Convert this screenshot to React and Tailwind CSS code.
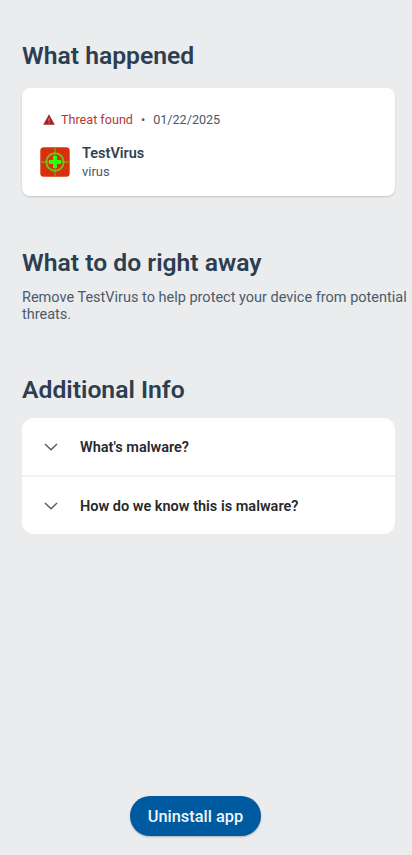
import React from "react";

function Heading({ children }) {
  return (
    <h2 className="text-[24.7px] leading-[28px] font-semibold text-[#2c3e50] whitespace-nowrap">
      {children}
    </h2>
  );
}

function WarningIcon() {
  return (
    <svg width="12" height="11" viewBox="0 0 12 11" className="mb-[2px] shrink-0">
      <path d="M6 .2 11.8 10.7H.2Z" fill="#a8202c" />
      <path d="M6 4v3.2M6 8.2v1.1" stroke="#d08f95" strokeWidth="1" />
    </svg>
  );
}

function TargetIcon() {
  return (
    <svg width="30" height="30" viewBox="0 0 30 30" className="shrink-0">
      <rect x=".3" y=".3" width="29.4" height="29.4" rx="3.5" fill="#d8300c" />
      <path d="M15 .5v29M.5 15h29" stroke="#7f9a10" strokeWidth="1.5" />
      <circle cx="15" cy="15" r="8.7" fill="none" stroke="#6fc414" strokeWidth="1.9" />
      <path d="M15 9v12M9 15h12" stroke="#2bff0a" strokeWidth="4" />
    </svg>
  );
}

function AccordionRow({ label }) {
  return (
    <button className="flex h-[57px] w-full items-center bg-white pl-[22px] text-left">
      <svg width="14" height="8" viewBox="0 0 14 8" fill="none" className="shrink-0">
        <path d="M1 1l6 5.7L13 1" stroke="#55585b" strokeWidth="1.4" />
      </svg>
      <span className="ml-[22px] pt-[2px] text-[14.5px] leading-[20px] font-semibold text-[#27292b]">
        {label}
      </span>
    </button>
  );
}

export default function App() {
  return (
    <main className="flex h-[855px] w-[412px] flex-col overflow-hidden bg-[#ebecee] pt-[42px] pl-[22px] font-['Roboto',sans-serif]">
      <Heading>What happened</Heading>
      <section className="mt-[18px] h-[108px] w-[373px] rounded-[8px] bg-white pl-[18px] shadow-[0_1px_2px_rgba(0,0,0,0.16)]">
        <div className="flex items-center pt-[24px] pl-[3px] text-[12.6px] leading-[16px]">
          <WarningIcon />
          <span className="ml-[6px] text-[#b3383f]">Threat found</span>
          <span className="mx-[8px] text-[#4b5966]">•</span>
          <span className="text-[#4b5966]">01/22/2025</span>
        </div>
        <div className="mt-[15px] flex items-center">
          <TargetIcon />
          <div className="ml-[12px]">
            <div className="pt-[2px] text-[14.5px] leading-[18px] font-semibold text-[#34424f]">TestVirus</div>
            <div className="text-[13px] leading-[17px] text-[#4b5966]">virus</div>
          </div>
        </div>
      </section>

      <div className="mt-[53px]">
        <Heading>What to do right away</Heading>
      </div>
      <p className="mt-[12px] whitespace-nowrap text-[14.5px] leading-[17px] text-[#4b5b69]">
        Remove TestVirus to help protect your device from potential
        <br />
        threats.
      </p>

      <div className="mt-[53px]">
        <Heading>Additional Info</Heading>
      </div>
      <section className="mt-[14px] flex w-[373px] shrink-0 flex-col gap-[2px] overflow-hidden rounded-[12px] bg-[#f1f1f2]">
        <AccordionRow label="What's malware?" />
        <AccordionRow label="How do we know this is malware?" />
      </section>

      <button className="mt-auto mb-[19px] ml-[108px] h-[40px] w-[131px] rounded-full bg-[#005a9f] pt-[2px] text-[16.4px] leading-[20px] font-medium text-[#edf5fb] shadow-[0_1px_2px_rgba(0,0,0,0.25)]">
        Uninstall app
      </button>
    </main>
  );
}
